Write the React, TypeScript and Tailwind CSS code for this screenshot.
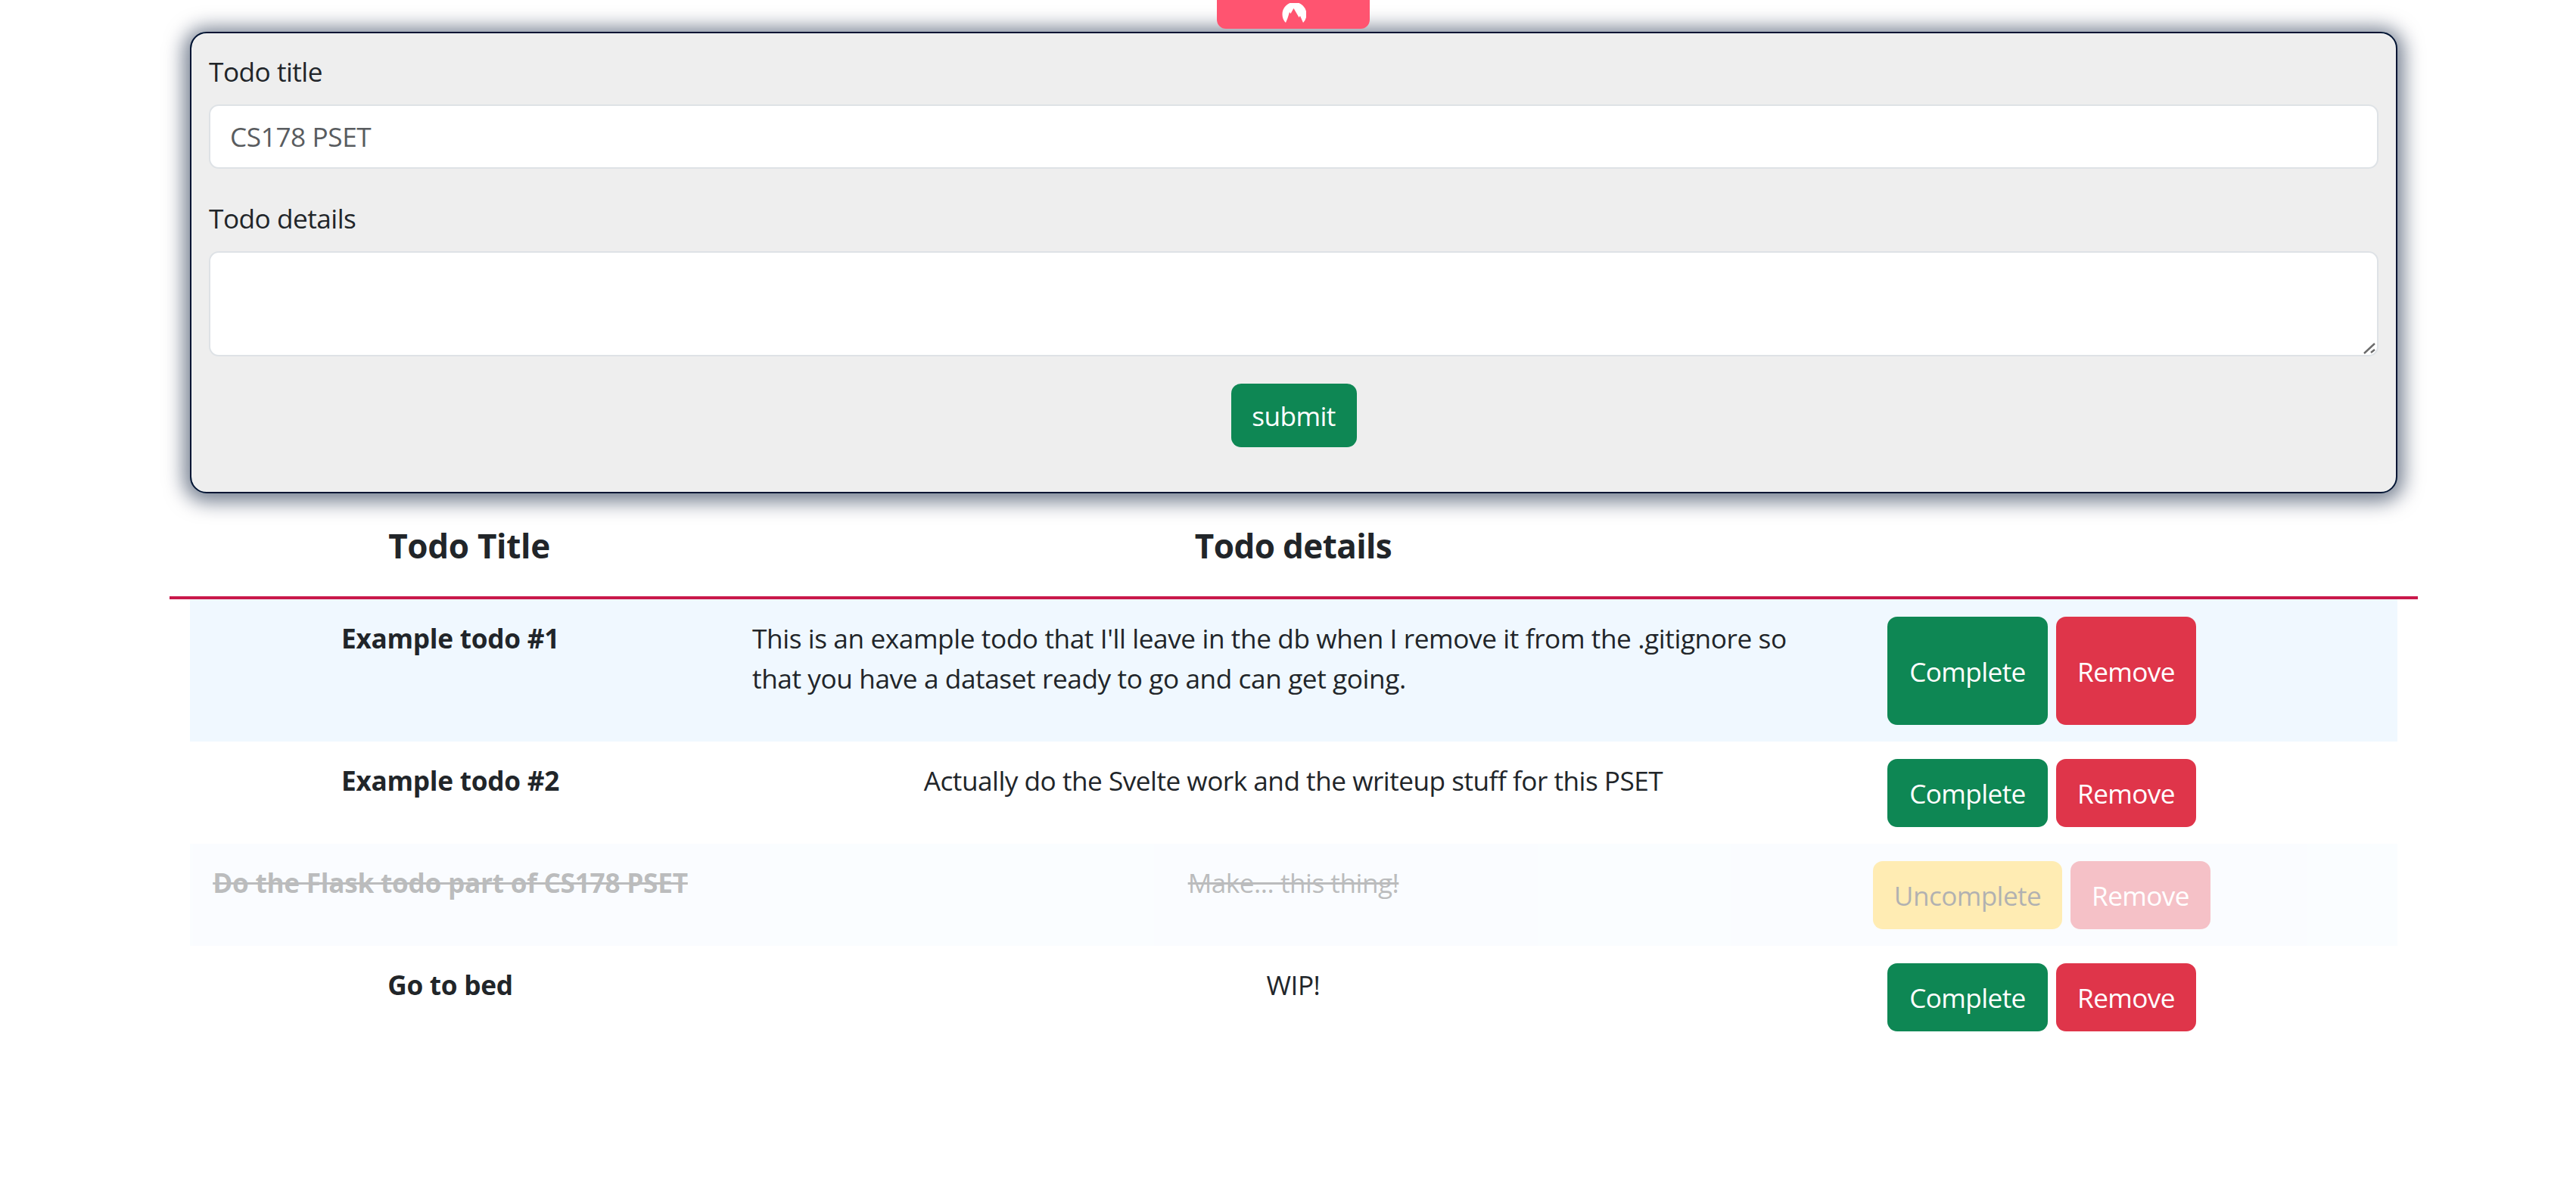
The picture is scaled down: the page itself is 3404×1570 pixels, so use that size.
import React from "react";

const font = { fontFamily: '"Open Sans", "Noto Sans", sans-serif' };

function Btn({ kind, children }: { kind: "ok" | "no" | "warn"; children: React.ReactNode }) {
  const color =
    kind === "ok"
      ? "bg-[#0e8754] text-white w-[212px]"
      : kind === "no"
        ? "bg-[#df354a] text-white w-[185px]"
        : "bg-[#ffc107] text-black w-[250px]";
  return (
    <button className={`${color} shrink-0 rounded-[13px] pt-[2px] text-[35.2px] leading-[52.8px] tracking-[-0.6px] flex items-center justify-center`}>
      {children}
    </button>
  );
}

function Row({
  title,
  details,
  left,
  done,
  bg,
}: {
  title: string;
  details: React.ReactNode;
  left?: boolean;
  done?: boolean;
  bg?: boolean;
}) {
  return (
    <div
      className={`grid grid-cols-[688px_1540px_438px_251px] ${bg ? "bg-[#f0f8ff]" : "bg-white"} ${done ? "opacity-30" : ""}`}
    >
      <div className={`pt-[25px] pb-[22px] text-center font-bold tracking-[-0.25px] text-[35.2px] leading-[52.8px] text-[#212529] whitespace-nowrap ${done ? "line-through" : ""}`}>
        {title}
      </div>
      <div className={`pt-[25px] pb-[22px] px-[55px] text-[35.2px] leading-[52.8px] text-[#212529] whitespace-nowrap ${left ? "text-left tracking-[-0.4px]" : "text-center tracking-[-0.5px]"} ${done ? "line-through" : ""}`}>
        <p className="mb-[35.2px]">{details}</p>
      </div>
      <div className="pt-[23px] pb-[22px] flex justify-center gap-[11px]">
        <Btn kind={done ? "warn" : "ok"}>{done ? "Uncomplete" : "Complete"}</Btn>
        <Btn kind="no">Remove</Btn>
      </div>
      <div />
    </div>
  );
}

export default function App() {
  return (
    <div className="relative min-h-[1570px] w-full overflow-hidden bg-white" style={font}>
      <div className="absolute left-[1608px] top-0 z-10 flex h-[38px] w-[202px] justify-center rounded-b-[12px] bg-[#ff5470]">
        <svg width="34" height="27" viewBox="0 0 34 27" className="mt-[4px]">
          <path
            d="M7 26 A16 16 0 1 1 30 26 L26 17 L24.5 19 L17.5 7 L13.5 14 L12 12 L9.5 20 Z"
            fill="#fff"
          />
        </svg>
      </div>
      <div className="ml-[251px] w-[2917px] pt-[42px]">
        <form className="flex h-[610px] flex-col rounded-[22px] border-2 border-[#001433] bg-[#eeeeee] px-[23px] pt-[24px] shadow-[0_3px_26px_8px_rgba(0,20,51,0.55)]">
          <label className="mb-[17px] text-[35.2px] leading-[52.8px] tracking-[-0.5px] text-[#212529]">Todo title</label>
          <input
            className="h-[85px] w-full rounded-[13px] border-2 border-[#dee2e6] bg-white px-[26px] text-[35.2px] tracking-[-0.4px] placeholder:text-[#595c5f]"
            placeholder="CS178 PSET"
          />
          <label className="mb-[17px] mt-[39px] text-[35.2px] leading-[52.8px] tracking-[-0.5px] text-[#212529]">Todo details</label>
          <div className="relative h-[139px]">
            <textarea className="block h-full w-full resize-none rounded-[13px] border-2 border-[#dee2e6] bg-white px-[26px]" />
            <svg width="18" height="16" viewBox="0 0 18 16" className="absolute right-[3px] bottom-[3px]">
              <path d="M2 15 L16 2 M11 14 L16 10" stroke="#6b6b6b" strokeWidth="2.4" fill="none" />
            </svg>
          </div>
          <div className="mt-[36px] flex justify-center">
            <button className="h-[84px] w-[166px] rounded-[13px] bg-[#0e8754] pt-[2px] text-[35.2px] tracking-[-0.6px] text-white">submit</button>
          </div>
        </form>
        <div className="grid grid-cols-[738px_1440px_739px] pt-[39px] pb-[37px]">
          <div className="text-center text-[44px] leading-[60px] font-bold tracking-[-0.3px] text-[#212529]">Todo Title</div>
          <div className="text-center text-[44px] leading-[60px] font-bold tracking-[-0.6px] text-[#212529]">Todo details</div>
          <div />
        </div>
        <div className="-mx-[27px] h-[4px] bg-[#c9184a]" />
        <Row
          bg
          left
          title="Example todo #1"
          details={
            <>
              This is an example todo that I'll leave in the db when I remove it from the .gitignore so
              <br />
              that you have a dataset ready to go and can get going.
            </>
          }
        />
        <Row title="Example todo #2" details="Actually do the Svelte work and the writeup stuff for this PSET" />
        <Row bg done title="Do the Flask todo part of CS178 PSET" details="Make... this thing!" />
        <Row title="Go to bed" details="WIP!" />
      </div>
    </div>
  );
}
